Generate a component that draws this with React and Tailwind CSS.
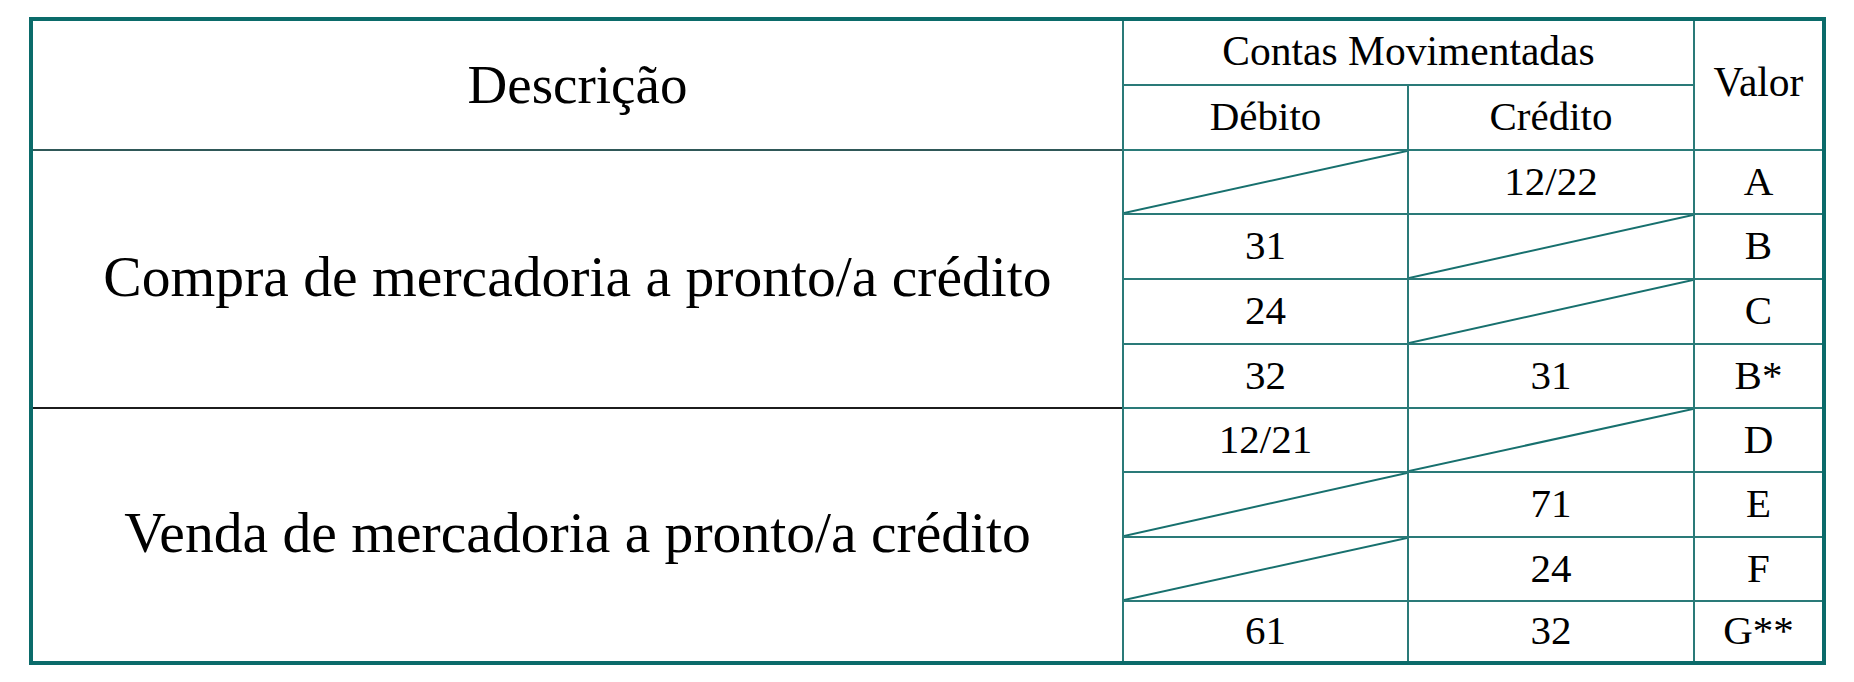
import React from "react";

const Diag = () => (
  <svg className="absolute inset-0 h-full w-full" preserveAspectRatio="none" viewBox="0 0 100 100">
    <line x1="0" y1="100" x2="100" y2="0" stroke="#17706e" strokeWidth="2" vectorEffect="non-scaling-stroke" />
  </svg>
);

const Cell = ({ children, diag, className = "" }) => (
  <div className={`relative flex items-center justify-center border-t-2 border-l-2 border-[#2a7a78] text-[41px] leading-none ${className}`}>
    {diag ? <Diag /> : <span className="relative top-[-1px]">{children}</span>}
  </div>
);

const rows = [
  { d: null, c: "12/22", v: "A" },
  { d: "31", c: null, v: "B" },
  { d: "24", c: null, v: "C" },
  { d: "32", c: "31", v: "B*" },
  { d: "12/21", c: null, v: "D" },
  { d: null, c: "71", v: "E" },
  { d: null, c: "24", v: "F" },
  { d: "61", c: "32", v: "G**" },
];

export default function App() {
  return (
    <div className="min-h-[682px] w-[1854px] bg-white pl-[29px] pt-[17px] font-['Liberation_Serif',serif] text-black">
      <div className="h-[648px] w-[1797px] border-4 border-[#0b6b6a]">
        <div className="grid h-full w-full grid-cols-[1089px_285px_286px_129px] grid-rows-[63px_65px_64px_65px_65px_64px_64px_65px_64px_61px]">
          <div className="col-start-1 row-start-1 row-span-2 flex items-center justify-center text-[55px] leading-none">
            <span className="relative top-[-1px]">Descrição</span>
          </div>
          <div className="col-start-2 col-span-2 row-start-1 flex items-center justify-center border-l-2 border-[#2a7a78] text-[41.5px] leading-none">
            <span className="relative top-[-1px]">Contas Movimentadas</span>
          </div>
          <div className="col-start-4 row-start-1 row-span-2 flex items-center justify-center border-l-2 border-[#2a7a78] text-[41.5px] leading-none">
            <span className="relative top-[-2px]">Valor</span>
          </div>
          <Cell className="col-start-2 row-start-2">Débito</Cell>
          <Cell className="col-start-3 row-start-2">Crédito</Cell>

          <div className="col-start-1 row-start-3 row-span-4 flex items-center justify-center border-t-2 border-[#2f5858] text-[57.6px] leading-none">
            <span className="relative top-[-2px]">Compra de mercadoria a pronto/a crédito</span>
          </div>
          <div className="col-start-1 row-start-7 row-span-4 flex items-center justify-center border-t-2 border-[#1c1c1c] text-[57.6px] leading-none">
            <span className="relative top-[-2px]">Venda de mercadoria a pronto/a crédito</span>
          </div>

          {rows.map((r, i) => (
            <React.Fragment key={i}>
              <Cell className="col-start-2" diag={r.d === null}>{r.d}</Cell>
              <Cell className="col-start-3" diag={r.c === null}>{r.c}</Cell>
              <Cell className="col-start-4">{r.v}</Cell>
            </React.Fragment>
          ))}
        </div>
      </div>
    </div>
  );
}
